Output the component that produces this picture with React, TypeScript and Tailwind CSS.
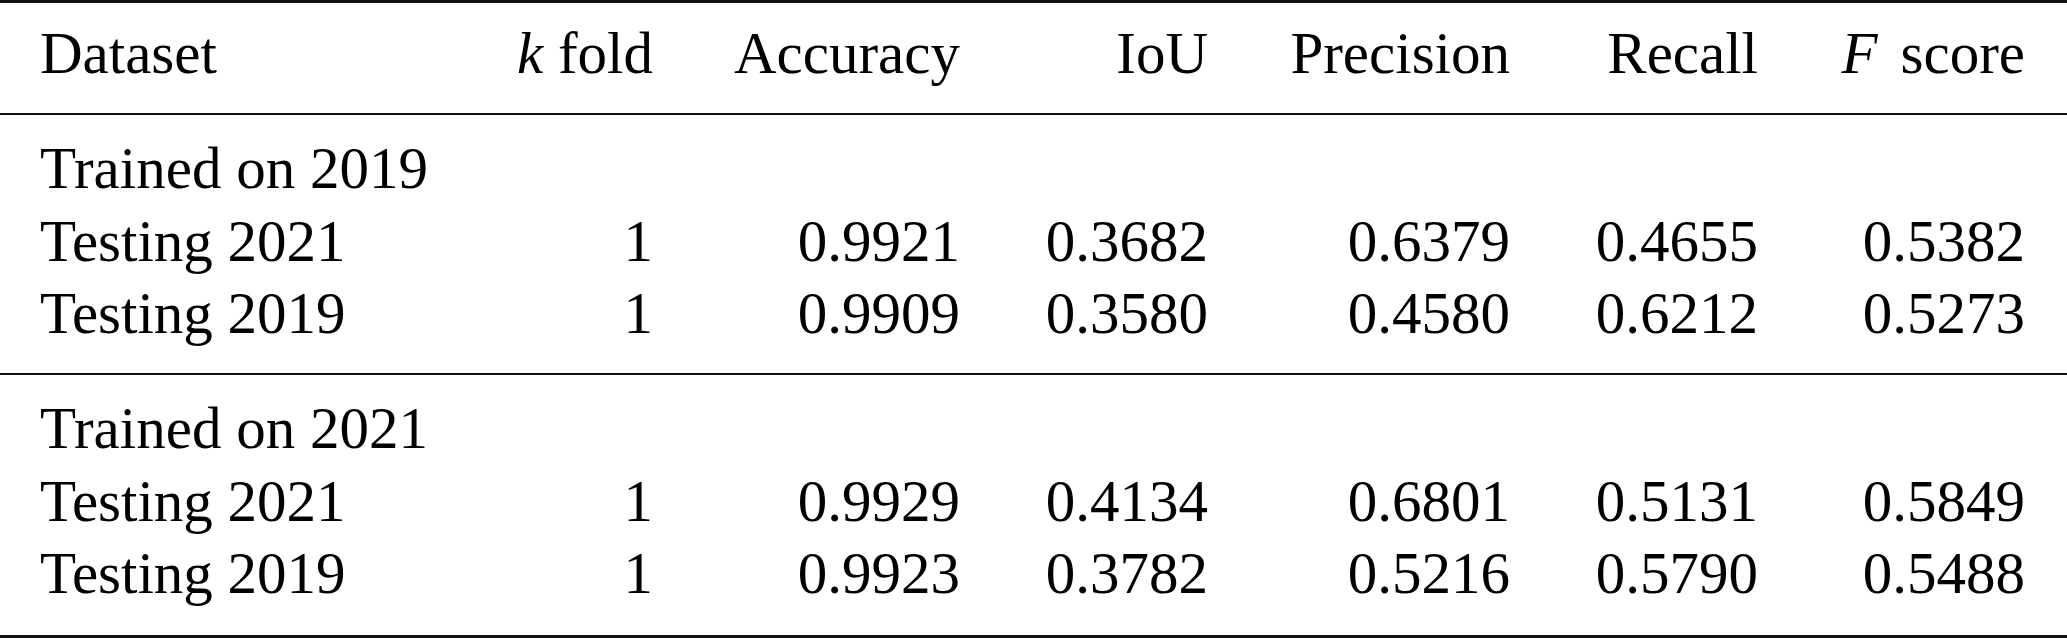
const groups = [
  {
    title: 'Trained on 2019',
    rows: [
      ['Testing 2021', '1', '0.9921', '0.3682', '0.6379', '0.4655', '0.5382'],
      ['Testing 2019', '1', '0.9909', '0.3580', '0.4580', '0.6212', '0.5273'],
    ],
  },
  {
    title: 'Trained on 2021',
    rows: [
      ['Testing 2021', '1', '0.9929', '0.4134', '0.6801', '0.5131', '0.5849'],
      ['Testing 2019', '1', '0.9923', '0.3782', '0.5216', '0.5790', '0.5488'],
    ],
  },
]

const grid =
  'grid grid-cols-[460px_153px_307px_248px_302px_248px_267px] pl-[40px] pr-[42px]'

function Row({ cells }: { cells: React.ReactNode[] }) {
  return (
    <div className={`${grid} leading-[72.5px]`}>
      {cells.map((c, i) => (
        <div key={i} className={i === 0 ? 'text-left whitespace-nowrap' : 'text-right whitespace-nowrap'}>
          {c}
        </div>
      ))}
    </div>
  )
}

export default function App() {
  return (
    <div className="w-[2067px] bg-white text-black font-[Liberation_Serif,Times_New_Roman,serif] text-[59px]">
      {/* header */}
      <div className="border-t-[3px] border-b-2 border-[#111] pt-[14px] pb-[24px]">
        <div className={`${grid} leading-[72px]`}>
          <div className="text-left">Dataset</div>
          <div className="text-right whitespace-nowrap">
            <i>k</i> fold
          </div>
          <div className="text-right">Accuracy</div>
          <div className="text-right">IoU</div>
          <div className="text-right">Precision</div>
          <div className="text-right">Recall</div>
          <div className="text-right whitespace-nowrap">
            <i>F</i>
            <span className="ml-[23px]">score</span>
          </div>
        </div>
      </div>

      {/* first group */}
      <div className="border-b-2 border-[#111] pt-[17px] pb-[23.5px]">
        <Row cells={[groups[0].title, '', '', '', '', '', '']} />
        {groups[0].rows.map((r) => (
          <Row key={r[0]} cells={r} />
        ))}
      </div>

      {/* second group */}
      <div className="border-b-[3px] border-[#111] pt-[17px] pb-[25.5px]">
        <Row cells={[groups[1].title, '', '', '', '', '', '']} />
        {groups[1].rows.map((r) => (
          <Row key={r[0]} cells={r} />
        ))}
      </div>
    </div>
  )
}
